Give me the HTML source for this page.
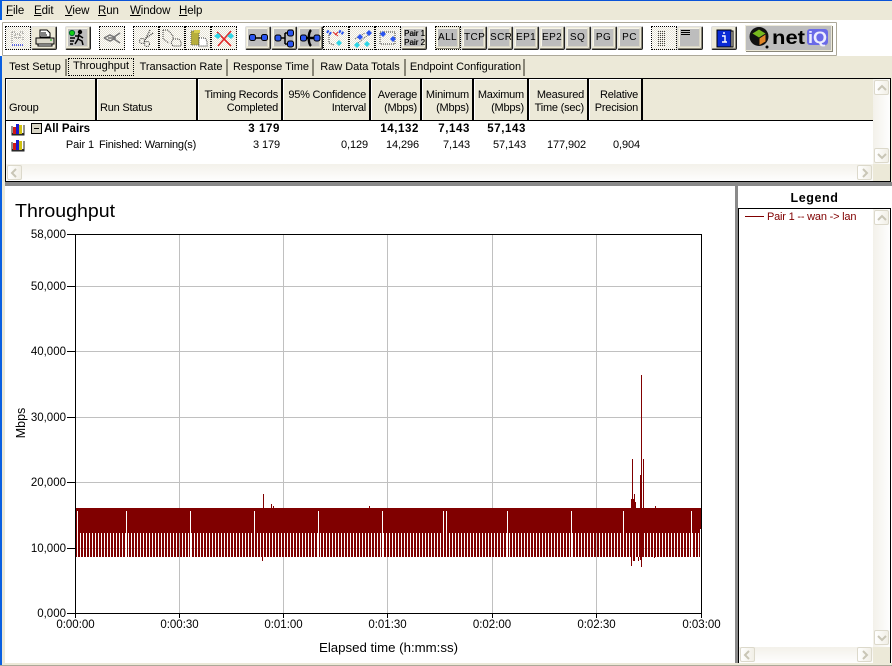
<!DOCTYPE html>
<html><head><meta charset="utf-8"><style>
*{box-sizing:border-box}
html,body{margin:0;padding:0}
body{width:892px;height:666px;overflow:hidden;background:#ece9d8;position:relative;font:11px "Liberation Sans",sans-serif;color:#000}
.a{position:absolute;white-space:nowrap}
.m{top:4px;font-size:11.5px;line-height:14px;letter-spacing:-.1px}
.m u{text-decoration:underline}
.b{position:absolute;top:26px;width:26px;height:24px;background:#ece9d8;border:1px solid #222;border-top-color:#ddd;border-left-color:#ddd;border-radius:2px;box-shadow:inset -1px -1px 0 #8a8778}
.b i{position:absolute;left:1px;top:1px;width:21px;height:19px;background:#bdbdbd;display:block;font:10px/17px "Liberation Sans",sans-serif;text-align:center;font-style:normal;letter-spacing:.4px;color:#000;border:1px solid #f7f5ea;border-right-color:#d8d5c5;border-bottom-color:#d8d5c5;white-space:nowrap}
.b svg,.d svg{position:absolute;left:0;top:0}
.d{position:absolute;top:26px;width:26px;height:24px;border:1px dotted #000;background:repeating-conic-gradient(#e6e3d6 0 25%,#fdfdfb 0 50%) 0 0/2px 2px}
.t{position:absolute;top:59px;height:17px;line-height:17px;font-size:11px;text-align:center;border-right:2px solid #8a8778;background:#ece9d8;white-space:nowrap;letter-spacing:-.03px}
.h{position:absolute;top:79px;height:41px;background:#ece9d8;border-right:2px solid #000;font-size:11px;line-height:13px;padding:9px 3px 0 0;text-align:right;box-shadow:inset 1px 1px 0 #fff;letter-spacing:-.22px;white-space:nowrap}
.r{position:absolute;text-align:right;line-height:13px;font-size:11px;white-space:nowrap;letter-spacing:-.1px}
.bd{font-weight:bold;font-size:11.5px;letter-spacing:.6px}
.sb{position:absolute;border:1px solid #dcd9cb;border-radius:2px;background:linear-gradient(90deg,#fff,#f1efe6);color:#c9c6b6;width:15px;height:15px}
.sb svg{position:absolute;left:1px;top:1px}
</style></head><body>
<div class="a" style="left:0;top:0;width:892px;height:1px;background:#0a53d8"></div>
<div class="a" style="left:0;top:0;width:2px;height:666px;background:#0a5fe0"></div>
<div class="a" style="left:0;top:665px;width:892px;height:1px;background:#aca899"></div>

<div class="a m" style="left:6px"><u>F</u>ile</div>
<div class="a m" style="left:34px"><u>E</u>dit</div>
<div class="a m" style="left:65px"><u>V</u>iew</div>
<div class="a m" style="left:98px"><u>R</u>un</div>
<div class="a m" style="left:130px"><u>W</u>indow</div>
<div class="a m" style="left:179px"><u>H</u>elp</div>

<div class="a" style="left:0;top:20px;width:892px;height:36px;background:#fff"></div>
<div class="a" style="left:2px;top:22px;width:835px;height:34px;background:#fff;border:1px solid #aca899;border-radius:1px"></div>

<div class="d" style="left:5px"><svg width="24" height="22"><path d="M6 5h3M14 5h3v3M6 5v12M17 10v4M9 7h5v4H9z" stroke="#777" fill="none" stroke-dasharray="1 1"/><path d="M6 18h12" stroke="#2233dd" stroke-dasharray="1 1" stroke-width="1.4"/></svg></div>
<div class="b" style="left:31px"><svg width="24" height="22"><path d="M8 3h7l3 3v4H8z" fill="#fff" stroke="#000"/><path d="M4 11h18v6H4z" fill="#dcd9cb" stroke="#000"/><path d="M6 17h14v2H6z" fill="#fff" stroke="#000"/><path d="M9 6h5M9 8h6" stroke="#000"/><path d="M18 13h2" stroke="#0a0"/></svg></div>
<div class="b" style="left:65px"><i></i><svg width="24" height="22"><circle cx="6" cy="6" r="2.6" fill="#12d012" stroke="#063"/><circle cx="14" cy="5" r="2.2" fill="#000"/><path d="M13 7l-1 5-3 5M12 12l4 2 1 4M9 9l5 0 3 2M4 11h5M4 14h4M4 17h3" stroke="#000" stroke-width="1.5" fill="none"/></svg></div>
<div class="d" style="left:99px"><svg width="24" height="22"><path d="M4 11l6-3 4 2 6-4M4 11l6 3 4-2 6 4M8 11h8" stroke="#777" fill="none" stroke-width="1.5"/></svg></div>
<div class="d" style="left:133px"><svg width="24" height="22"><path d="M16 3l-5 10M19 6l-8 6" stroke="#333" stroke-dasharray="1 1" fill="none" stroke-width="1.3"/><circle cx="8" cy="14" r="2.5" fill="none" stroke="#333" stroke-dasharray="1 1"/><circle cx="13" cy="17" r="2.5" fill="none" stroke="#333" stroke-dasharray="1 1"/></svg></div>
<div class="d" style="left:159px"><svg width="24" height="22"><path d="M3 3h5l5 6v3M3 3v9l6 4M13 12h6l2 3v4h-8l-2-3z" stroke="#333" stroke-dasharray="1 1" fill="none"/></svg></div>
<div class="d" style="left:185px"><svg width="24" height="22"><rect x="5" y="4" width="8" height="14" fill="#b7ae3c" stroke="#666" stroke-dasharray="1 1"/><path d="M8 3h6v3H8z" fill="#d8ce50"/><path d="M13 11h6l2 3v5h-8z" fill="#fff" stroke="#333" stroke-dasharray="1 1"/></svg></div>
<div class="d" style="left:211px"><svg width="24" height="22"><path d="M5 5l14 14M19 4L6 19" stroke="#e02b2b" stroke-width="1.6"/><path d="M2 9l4-3 3 3-3 3zM15 9l4-3 3 3-3 3z" fill="#2cd6e6"/></svg></div>

<div class="b" style="left:245px"><i></i><svg width="24" height="22"><path d="M7 11h11" stroke="#000" stroke-width="1.5"/><rect x="3.500" y="7.500" width="6" height="6" rx="2" fill="#2a55f0" stroke="#000"/><rect x="15.500" y="7.500" width="6" height="6" rx="2" fill="#2a55f0" stroke="#000"/></svg></div>
<div class="b" style="left:271px"><i></i><svg width="24" height="22"><path d="M8 11h5M13 6v11M13 6h4M13 17h4" stroke="#000" stroke-width="1.5" fill="none"/><rect x="3" y="8" width="6" height="6" rx="2" fill="#2a55f0" stroke="#000"/><rect x="15.500" y="3" width="6" height="6" rx="2" fill="#2a55f0" stroke="#000"/><rect x="15.500" y="14" width="6" height="6" rx="2" fill="#2a55f0" stroke="#000"/></svg></div>
<div class="b" style="left:297px"><i></i><svg width="24" height="22"><rect x="2.500" y="8" width="6" height="6" rx="2" fill="#2a55f0" stroke="#000"/><rect x="16" y="8" width="6" height="6" rx="2" fill="#2a55f0" stroke="#000"/><path d="M13 3c-3 3-3 13 0 16M9 11h7" stroke="#000" stroke-width="2.400" fill="none"/></svg></div>
<div class="d" style="left:323px"><svg width="24" height="22"><path d="M3 4l4 3M15 4l5 3" stroke="#2a55f0" stroke-width="3" stroke-dasharray="2 1"/><path d="M9 5l5 4M14 5l-3 3" stroke="#e02b2b"/><path d="M5 8v8l5 2" stroke="#333" stroke-dasharray="1 1" fill="none"/><path d="M12 16l3-3 3 3-3 3z" fill="#2cd6e6"/></svg></div>
<div class="d" style="left:349px"><svg width="24" height="22"><path d="M5 12l10-6M8 16l10-8" stroke="#555" stroke-dasharray="1 1"/><path d="M7 10l3-3 3 3-3 3zM16 6l3-3 3 3-3 3z" fill="#2a55f0"/><path d="M4 18l3-3 3 3-3 3zM14 17l3-3 3 3-3 3z" fill="#2cd6e6"/></svg></div>
<div class="d" style="left:375px"><svg width="24" height="22"><path d="M4 5h15v12H4z" stroke="#333" stroke-dasharray="1 1" fill="none"/><path d="M4 7l3-3 3 3-3 3zM14 12l3-3 3 3-3 3z" fill="#2a55f0"/></svg></div>
<div class="b" style="left:401px"><i style="font:8px/9px 'Liberation Sans',sans-serif;letter-spacing:0;padding-top:0;color:#000;text-shadow:.3px 0 0 #000">Pair 1<br>Pair 2</i></div>

<div class="b" style="left:435px;border:1px dotted #000;border-radius:0"><i>ALL</i></div>
<div class="b" style="left:461px"><i>TCP</i></div>
<div class="b" style="left:487px"><i>SCR</i></div>
<div class="b" style="left:513px"><i>EP1</i></div>
<div class="b" style="left:539px"><i>EP2</i></div>
<div class="b" style="left:565px"><i>SQ</i></div>
<div class="b" style="left:591px"><i>PG</i></div>
<div class="b" style="left:617px"><i>PC</i></div>
<div class="d" style="left:651px"><svg width="24" height="22"><defs><pattern id="q" width="2" height="2" patternUnits="userSpaceOnUse"><rect width="1" height="1" fill="#444"/></pattern></defs><rect x="5" y="3" width="9" height="16" fill="url(#q)"/></svg></div>
<div class="b" style="left:677px"><i></i><svg width="24" height="22"><path d="M3 3.500h9M3 5.500h9M3 7.500h9" stroke="#000"/></svg></div>
<div class="b" style="left:711px"><svg width="24" height="22"><rect x="5" y="3" width="14" height="17" fill="#0a2bd6" stroke="#000"/><path d="M19 4h2v16H7" stroke="#000" fill="none"/><path d="M12 5v2M10 9h3v6h2M10 15h4" stroke="#fff" stroke-width="1.400" fill="none"/></svg></div>
<div class="a" style="left:745px;top:25px;width:87px;height:26px;background:#bdbdbd;border:1px solid #ece9d8;box-shadow:1px 1px 0 #8a8778"></div>
<svg class="a" style="left:748px;top:26px" width="84" height="24"><circle cx="11" cy="10.500" r="9.500" fill="#111"/><path d="M4.500 7.500l6.500-4 6.500 4-6.500 4z" fill="#77b81e"/><path d="M17.500 8.500l-6 4v6.500l6-3.500z" fill="#e0862a"/><circle cx="19" cy="21" r="1.500" fill="#000"/><text x="24" y="18" font-family="Liberation Sans" font-weight="bold" font-size="19" textLength="33" lengthAdjust="spacingAndGlyphs" fill="#000">net</text><rect x="59" y="3" width="21" height="16" rx="3" fill="#6a6ae8"/><text x="60" y="17" font-family="Liberation Sans" font-weight="bold" font-size="17" textLength="19" lengthAdjust="spacingAndGlyphs" fill="#ededff">iQ</text></svg>

<div class="t" style="left:5px;width:62px">Test Setup</div>
<div class="t" style="left:68px;top:58px;width:66px;height:18px;border:1px dotted #000;line-height:14px">Throughput</div>
<div class="t" style="left:136px;width:92px">Transaction Rate</div>
<div class="t" style="left:230px;width:84px">Response Time</div>
<div class="t" style="left:316px;width:90px">Raw Data Totals</div>
<div class="t" style="left:408px;width:117px">Endpoint Configuration</div>

<!-- grid -->
<div class="a" style="left:5px;top:78px;width:886px;height:104px;background:#fff;border:1px solid #000"></div>
<div class="a" style="left:6px;top:79px;width:868px;height:41px;background:#ece9d8"></div>
<div class="a" style="left:6px;top:120px;width:867px;height:1px;background:#000"></div>
<div class="h" style="left:6px;width:91px;text-align:left;padding:23px 0 0 3px">Group</div>
<div class="h" style="left:97px;width:101px;text-align:left;padding:23px 0 0 3px">Run Status</div>
<div class="h" style="left:198px;width:85px;padding-top:10px">Timing Records<br>Completed</div>
<div class="h" style="left:283px;width:88px;padding-top:10px">95% Confidence<br>Interval</div>
<div class="h" style="left:371px;width:51px;padding-top:10px">Average<br>(Mbps)</div>
<div class="h" style="left:422px;width:52px;padding-top:10px">Minimum<br>(Mbps)</div>
<div class="h" style="left:474px;width:55px;padding-top:10px">Maximum<br>(Mbps)</div>
<div class="h" style="left:529px;width:60px;padding-top:10px">Measured<br>Time (sec)</div>
<div class="h" style="left:589px;width:54px;padding-top:10px">Relative<br>Precision</div>

<svg class="a" style="left:11px;top:122px" width="14" height="14"><path d="M1 12h12" stroke="#333" stroke-width="2"/><rect x="2" y="5" width="3" height="7" fill="#d01818"/><rect x="5" y="2" width="3" height="10" fill="#1a1ad0"/><rect x="8" y="3" width="3" height="9" fill="#d0c010"/><path d="M1 4v9h12V3" stroke="#222" fill="none"/></svg>
<svg class="a" style="left:11px;top:138px" width="14" height="14"><path d="M1 12h12" stroke="#333" stroke-width="2"/><rect x="2" y="5" width="3" height="7" fill="#d01818"/><rect x="5" y="2" width="3" height="10" fill="#1a1ad0"/><rect x="8" y="3" width="3" height="9" fill="#d0c010"/><path d="M1 4v9h12V3" stroke="#222" fill="none"/></svg>
<div class="a" style="left:31px;top:123px;width:11px;height:11px;border:1px solid #000;background:#d8d5c5"><div style="position:absolute;left:2px;top:4px;width:5px;height:1px;background:#000"></div></div>
<div class="a" style="left:44px;top:123px;line-height:13px;font-weight:bold;font-size:11.5px">All Pairs</div>
<div class="r bd" style="right:612px;top:123px">3 179</div>
<div class="r bd" style="right:473px;top:123px">14,132</div>
<div class="r bd" style="right:422px;top:123px">7,143</div>
<div class="r bd" style="right:366px;top:123px">57,143</div>
<div class="r" style="right:798px;top:139px">Pair 1</div>
<div class="a" style="left:99px;top:139px;line-height:13px;letter-spacing:-.2px">Finished: Warning(s)</div>
<div class="r" style="right:612px;top:139px">3 179</div>
<div class="r" style="right:524px;top:139px">0,129</div>
<div class="r" style="right:473px;top:139px">14,296</div>
<div class="r" style="right:422px;top:139px">7,143</div>
<div class="r" style="right:366px;top:139px">57,143</div>
<div class="r" style="right:306px;top:139px">177,902</div>
<div class="r" style="right:252px;top:139px">0,904</div>

<div class="a" style="left:6px;top:164px;width:868px;height:17px;background:linear-gradient(#f3f1ea,#fefefe)"></div>
<div class="sb" style="left:7px;top:165px"><svg width="12" height="12"><path d="M7 2L3 6l4 4" stroke="#c9c6b6" stroke-width="2" fill="none"/></svg></div>
<div class="sb" style="left:857px;top:165px"><svg width="12" height="12"><path d="M4 2l4 4-4 4" stroke="#c9c6b6" stroke-width="2" fill="none"/></svg></div>
<div class="a" style="left:873px;top:79px;width:17px;height:85px;background:linear-gradient(90deg,#f3f1ea,#fefefe)"></div>
<div class="a" style="left:873px;top:164px;width:17px;height:17px;background:#ece9d8"></div>
<div class="sb" style="left:874px;top:80px"><svg width="12" height="12"><path d="M2 8l4-4 4 4" stroke="#c9c6b6" stroke-width="2" fill="none"/></svg></div>
<div class="sb" style="left:874px;top:148px"><svg width="12" height="12"><path d="M2 4l4 4 4-4" stroke="#c9c6b6" stroke-width="2" fill="none"/></svg></div>

<!-- chart area -->
<div class="a" style="left:5px;top:182px;width:887px;height:4px;background:#8a8a8a"></div>
<div class="a" style="left:5px;top:186px;width:887px;height:477px;background:#fff"></div>
<div class="a" style="left:735px;top:186px;width:3px;height:477px;background:#8a8a8a"></div>

<svg class="a" style="left:0;top:0" width="736" height="666" font-family="Liberation Sans" font-size="11.5">
<defs><pattern id="p" x="0" y="0" width="3" height="60" patternUnits="userSpaceOnUse"><rect width="2" height="60" fill="#800000"/></pattern></defs>
<path d="M179.500 234V613M283.500 234V613M387.500 234V613M492.500 234V613M596.500 234V613M75 286.500H701M75 351.500H701M75 417.500H701M75 482.500H701M75 548.500H701" stroke="#c0c0c0" fill="none"/>
<rect x="75" y="508" width="626" height="25" fill="#800000"/>
<rect x="75" y="533" width="626" height="24" fill="url(#p)"/>
<path d="M77.500 511V557M126.500 511V557M190.500 511V557M254.500 511V557M318.500 511V557M382.500 511V557M443.500 511V557M446.500 511V557M507.500 511V557M571.500 511V557M623.500 511V557M691.500 511V557M700.500 529V557" stroke="#fff"/>
<path d="M75.500 503V557M263.500 494V508M262.500 557V561M271.500 504V508M273.500 506V508M369.500 506V508M641.500 375V567M632.500 459V508M643.500 459V508M640.500 475V560M634.500 494V561M633.500 499V561M631.500 499V566M635.500 502V508M655.500 506V508M654.500 550V558M643.500 513V546M638.500 557V561" stroke="#800000" fill="none"/>
<path d="M75.500 234V613M75 234.500H701M701.500 234V613M75 613.500H702M67 234.500H75M67 286.500H75M67 351.500H75M67 417.500H75M67 482.500H75M67 548.500H75M67 613.500H75M75.500 613V618M179.500 613V618M283.500 613V618M387.500 613V618M492.500 613V618M596.500 613V618M701.500 613V618" stroke="#000" fill="none"/>
<g text-anchor="end"><text x="66" y="238">58,000</text><text x="66" y="290">50,000</text><text x="66" y="355">40,000</text><text x="66" y="421">30,000</text><text x="66" y="486">20,000</text><text x="66" y="552">10,000</text><text x="66" y="617">0,000</text></g>
<g text-anchor="middle"><text x="75.500" y="628">0:00:00</text><text x="179.500" y="628">0:00:30</text><text x="283.500" y="628">0:01:00</text><text x="387.500" y="628">0:01:30</text><text x="492" y="628">0:02:00</text><text x="596.500" y="628">0:02:30</text><text x="701.500" y="628">0:03:00</text></g>
<text x="319" y="652" font-size="13" textLength="139" lengthAdjust="spacingAndGlyphs">Elapsed time (h:mm:ss)</text>
<text x="15" y="217" font-size="18.500" textLength="100" lengthAdjust="spacingAndGlyphs">Throughput</text>
<text transform="translate(25,423) rotate(-90)" text-anchor="middle" font-size="12.500">Mbps</text>
</svg>

<!-- legend -->
<div class="a" style="left:739px;top:191px;width:151px;text-align:center;font-weight:bold;font-size:12.500px;line-height:14px;letter-spacing:.6px">Legend</div>
<div class="a" style="left:738px;top:208px;width:153px;height:455px;border:1px solid #000;border-bottom:0;background:#fff"></div>
<div class="a" style="left:745px;top:216px;width:19px;height:1px;background:#800000"></div>
<div class="a" style="left:767px;top:210px;color:#800000;font-size:11px;line-height:14px;letter-spacing:-.2px">Pair 1 -- wan -&gt; lan</div>
<div class="a" style="left:873px;top:209px;width:17px;height:438px;background:linear-gradient(90deg,#f3f1ea,#fefefe)"></div>
<div class="a" style="left:739px;top:647px;width:151px;height:16px;background:linear-gradient(#f3f1ea,#fefefe)"></div>
<div class="a" style="left:873px;top:647px;width:17px;height:16px;background:#ece9d8"></div>
<div class="sb" style="left:874px;top:210px"><svg width="12" height="12"><path d="M2 8l4-4 4 4" stroke="#c9c6b6" stroke-width="2" fill="none"/></svg></div>
<div class="sb" style="left:874px;top:630px"><svg width="12" height="12"><path d="M2 4l4 4 4-4" stroke="#c9c6b6" stroke-width="2" fill="none"/></svg></div>
<div class="sb" style="left:740px;top:647px"><svg width="12" height="12"><path d="M7 2L3 6l4 4" stroke="#c9c6b6" stroke-width="2" fill="none"/></svg></div>
<div class="sb" style="left:857px;top:647px"><svg width="12" height="12"><path d="M4 2l4 4-4 4" stroke="#c9c6b6" stroke-width="2" fill="none"/></svg></div>
</body></html>
